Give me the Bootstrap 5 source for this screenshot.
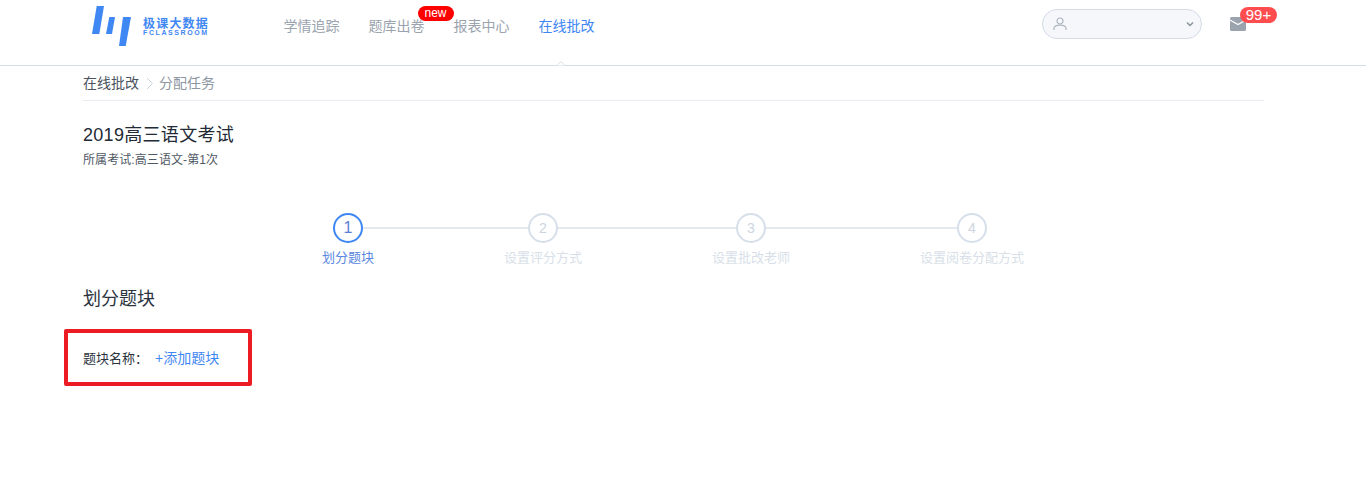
<!DOCTYPE html>
<html lang="zh">
<head>
<meta charset="utf-8">
<title>分配任务</title>
<link href="https://cdn.jsdelivr.net/npm/bootstrap@5.3.0/dist/css/bootstrap.min.css" rel="stylesheet">
<style>
body{font-family:"Liberation Sans","Noto Sans CJK SC",sans-serif;background:#fff;color:#2b3340;height:500px;overflow:hidden}
.top-bar{height:66px;border-bottom:1px solid #d5dce5;position:relative}
.top-inner{padding-left:92px;padding-right:120px;height:52px}
.brand-zone{width:191.500px;height:40px}
.brand-text{margin-left:12px;margin-top:2px;color:#3f87f2;line-height:1;width:66px}
.brand-cn{font-size:12px;font-weight:700;line-height:12px;letter-spacing:1.200px;white-space:nowrap}
.brand-en{font-size:7px;letter-spacing:1.600px;line-height:6px;font-weight:700;white-space:nowrap}
.menu-row{gap:29px;font-size:14px;color:#9aa3ae}
.menu-item{position:relative;line-height:20px}
.menu-on{color:#3f87f2}
.new-tag{position:absolute;left:49px;top:-10px;width:36px;height:15px;border-radius:8px;background:#fe0000;color:#fff;font-size:12px;line-height:14px;text-align:center;font-weight:400}
.caret-mark{position:absolute;left:554px;top:59px;width:14px;height:7px}
.user-box{width:160px;height:30px;border:1px solid #d3dbe6;border-radius:15px;background:#f5f7fa;padding:0 7px 0 10px;margin-top:-4px}
.mail-zone{margin-left:28px;position:relative;width:16px;height:14px;margin-top:-4px}
.count-tag{position:absolute;left:10px;top:-10px;height:16px;width:37px;border-radius:8px;background:#ff4d4f;color:#fff;font-size:15px;line-height:16px;text-align:center;white-space:nowrap}
.page-wrap{padding:0 102px 0 83px}
.crumb-row{height:35px;border-bottom:1px solid #e9ecf0;font-size:14px}
.crumb-a{color:#4a5360}
.crumb-b{color:#8d96a2}
.crumb-sep{margin:0 5px 0 7px}
.exam-title{font-size:18px;font-weight:400;color:#222a35;line-height:24px;letter-spacing:.3px;margin:22px 0 0}
.exam-sub{font-size:12px;color:#4f5865;line-height:16px;margin:5px 0 0;letter-spacing:.08px}
.steps-row{gap:130px;margin:45px 0 0 239px;position:relative;width:max-content}
.steps-line{position:absolute;left:26px;right:52px;top:14px;height:2px;background:#e4e9f0}
.step-col{position:relative;width:78px}
.step-col.w-a{width:52px}
.step-col.w-b{width:104px}
.step-dot{width:30px;height:30px;border-radius:50%;border:2px solid #d6dfea;background:#fff;color:#ccd5e0;font-size:14px;line-height:26px;text-align:center}
.step-name{font-size:13px;line-height:18px;margin-top:6px;color:#d8dfe8;white-space:nowrap}
.step-col.is-on .step-dot{border-color:#3f87f2;color:#5b7fd6;font-size:16px}
.step-col.is-on .step-name{color:#5a87e0}
.block-head{font-size:18px;font-weight:400;line-height:24px;color:#2b3340;margin:20px 0 0}
.outline-box{width:188px;height:57px;border:4px solid #ed1c24;border-radius:2px;margin:18px 0 0 -19px;padding:2px 0 0 15px;font-size:13px;color:#2b3340}
.add-link{font-size:14px;color:#3f87f2;text-decoration:none;margin-left:7px}
</style>
</head>
<body>
<header class="top-bar">
  <div class="top-inner d-flex align-items-center">
    <div class="brand-zone d-flex align-items-center">
      <svg width="39" height="40" viewBox="0 0 39 40" aria-hidden="true"><g fill="#3f87f2"><polygon points="4.700,0 12,0 7.300,28 0,28"/><polygon points="17.300,11 23,11 20,28 14,28"/><polygon points="31,11 39,11 33.700,40 27,40"/></g></svg>
      <div class="brand-text">
        <div class="brand-cn">极课大数据</div>
        <div class="brand-en">FCLASSROOM</div>
      </div>
    </div>
    <nav class="menu-row d-flex">
      <span class="menu-item">学情追踪</span>
      <span class="menu-item">题库出卷<span class="new-tag">new</span></span>
      <span class="menu-item">报表中心</span>
      <span class="menu-item menu-on">在线批改</span>
    </nav>
    <div class="ms-auto d-flex align-items-center">
      <div class="user-box d-flex align-items-center justify-content-between">
        <svg width="14" height="14" viewBox="0 0 14 14" fill="none" stroke="#aeb6c0" stroke-width="1.200" aria-hidden="true"><circle cx="7" cy="4" r="3"/><path d="M1 13v-1.500c0-2 2-3.300 6-3.300s6 1.300 6 3.300V13"/></svg>
        <svg width="8" height="6" viewBox="0 0 8 6" fill="none" stroke="#8a929d" stroke-width="1.500" aria-hidden="true"><path d="M1 1.500l3 3 3-3"/></svg>
      </div>
      <div class="mail-zone">
        <svg class="d-block" width="16" height="14" viewBox="0 0 16 14" aria-hidden="true"><rect width="16" height="14" rx="1.500" fill="#9aa3ae"/><path d="M0 3l8 4.500L16 3" fill="none" stroke="#fff" stroke-width="1.200"/></svg>
        <span class="count-tag">99+</span>
      </div>
    </div>
  </div>
  <svg class="caret-mark" viewBox="0 0 14 7" aria-hidden="true"><path d="M0 6.500h3L7 2.500l4 4h3" fill="#fff" stroke="#d5dce5"/></svg>
</header>
<main class="page-wrap">
  <div class="crumb-row d-flex align-items-center">
    <span class="crumb-a">在线批改</span>
    <svg class="crumb-sep" width="8" height="13" viewBox="0 0 8 13" fill="none" stroke="#ccd3dc" aria-hidden="true"><path d="M1 1l5.500 5.500L1 12"/></svg>
    <span class="crumb-b">分配任务</span>
  </div>
  <h1 class="exam-title">2019高三语文考试</h1>
  <p class="exam-sub">所属考试:高三语文-第1次</p>
  <div class="steps-row d-flex">
    <div class="steps-line"></div>
    <div class="step-col w-a is-on d-flex flex-column align-items-center"><div class="step-dot">1</div><div class="step-name">划分题块</div></div>
    <div class="step-col d-flex flex-column align-items-center"><div class="step-dot">2</div><div class="step-name">设置评分方式</div></div>
    <div class="step-col d-flex flex-column align-items-center"><div class="step-dot">3</div><div class="step-name">设置批改老师</div></div>
    <div class="step-col w-b d-flex flex-column align-items-center"><div class="step-dot">4</div><div class="step-name">设置阅卷分配方式</div></div>
  </div>
  <h2 class="block-head">划分题块</h2>
  <div class="outline-box d-flex align-items-center">
    <span>题块名称：</span><a class="add-link" href="#">+添加题块</a>
  </div>
</main>
</body>
</html>
